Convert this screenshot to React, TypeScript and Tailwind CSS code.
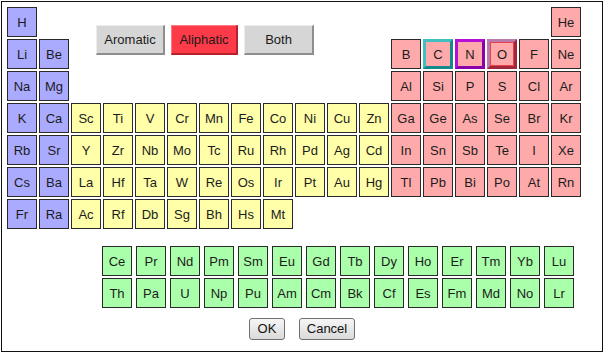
import React from 'react';

type Kind = 's' | 'd' | 'p' | 'f';

const fills: Record<Kind, string> = {
  s: 'bg-[#aaaaff]',
  d: 'bg-[#ffffaa]',
  p: 'bg-[#ffaaaa]',
  f: 'bg-[#aaffaa]',
};

// highlighted cells in the p-block
const rings: Record<string, string> = {
  C: 'border-[3px] border-t-[#3fbfbf] border-l-[#3fbfbf] border-b-[#148a8a] border-r-[#148a8a]',
  N: 'border-[3px] border-t-[#b410d8] border-l-[#b410d8] border-b-[#8a00aa] border-r-[#8a00aa]',
  O: 'border-[3px] border-t-[#b87aa8] border-l-[#b87aa8] border-b-[#a3263a] border-r-[#a3263a] shadow-[inset_0_0_0_1px_#e8404c]',
};

const sBlock = [
  ['H', ''],
  ['Li', 'Be'],
  ['Na', 'Mg'],
  ['K', 'Ca'],
  ['Rb', 'Sr'],
  ['Cs', 'Ba'],
  ['Fr', 'Ra'],
];

const dBlock = [
  [],
  [],
  ['', '', '', '', '', '', '', '', '', ''],
  ['Sc', 'Ti', 'V', 'Cr', 'Mn', 'Fe', 'Co', 'Ni', 'Cu', 'Zn'],
  ['Y', 'Zr', 'Nb', 'Mo', 'Tc', 'Ru', 'Rh', 'Pd', 'Ag', 'Cd'],
  ['La', 'Hf', 'Ta', 'W', 'Re', 'Os', 'Ir', 'Pt', 'Au', 'Hg'],
  ['Ac', 'Rf', 'Db', 'Sg', 'Bh', 'Hs', 'Mt', '', '', ''],
];

const pBlock = [
  ['', '', '', '', '', 'He'],
  ['B', 'C', 'N', 'O', 'F', 'Ne'],
  ['Al', 'Si', 'P', 'S', 'Cl', 'Ar'],
  ['Ga', 'Ge', 'As', 'Se', 'Br', 'Kr'],
  ['In', 'Sn', 'Sb', 'Te', 'I', 'Xe'],
  ['Tl', 'Pb', 'Bi', 'Po', 'At', 'Rn'],
  ['', '', '', '', '', ''],
];

const lanthanides = ['Ce', 'Pr', 'Nd', 'Pm', 'Sm', 'Eu', 'Gd', 'Tb', 'Dy', 'Ho', 'Er', 'Tm', 'Yb', 'Lu'];
const actinides = ['Th', 'Pa', 'U', 'Np', 'Pu', 'Am', 'Cm', 'Bk', 'Cf', 'Es', 'Fm', 'Md', 'No', 'Lr'];

function Cell({ sym, kind }: { sym: string; kind: Kind }) {
  if (!sym) return <div className="w-[30px] h-[30px]" />;
  const ring = rings[sym] ?? 'border border-[#2a2a2a]';
  return (
    <div
      className={`w-[30px] h-[30px] flex items-center justify-center text-[13px] leading-none text-[#1c1c1c] cursor-pointer ${fills[kind]} ${ring}`}
    >
      {sym}
    </div>
  );
}

function ModeButton({ label, active, width }: { label: string; active?: boolean; width: string }) {
  return (
    <button
      className={`${width} h-[30px] text-[13px] text-[#1a1a1a] border-t border-l border-b-2 border-r-2 ${
        active
          ? 'bg-[#fd3a48] border-t-[#ff7a84] border-l-[#ff7a84] border-b-[#b8202c] border-r-[#b8202c]'
          : 'bg-[#d6d6d6] border-t-[#ececec] border-l-[#ececec] border-b-[#8e8e8e] border-r-[#8e8e8e]'
      }`}
    >
      {label}
    </button>
  );
}

function DialogButton({ label, width }: { label: string; width: string }) {
  return (
    <button
      className={`${width} h-[22px] text-[13px] text-[#111] rounded-[3px] border border-[#707070] bg-gradient-to-b from-[#f6f6f6] to-[#dadada]`}
    >
      {label}
    </button>
  );
}

export default function App() {
  const rows = sBlock.map((s, i) => ({ s, d: dBlock[i], p: pBlock[i] }));

  return (
    <div className="p-[1px] bg-white" style={{ fontFamily: '"Liberation Sans", Arial, sans-serif' }}>
      <div className="w-[602px] h-[351px] border border-[#111] bg-white flex flex-col pt-[5px] pl-[5px]">
        <div className="flex flex-col gap-[2px] relative">
          {rows.map((r, i) => (
            <div key={i} className="flex gap-[2px]">
              {r.s.map((sym, j) => (
                <Cell key={'s' + j} sym={sym} kind="s" />
              ))}
              {i < 2 ? (
                i === 0 ? (
                  <div className="w-[318px] h-[30px] pl-[25px] pt-[18px] overflow-visible">
                    <div className="flex gap-[6px]">
                      <ModeButton label="Aromatic" width="w-[69px]" />
                      <ModeButton label="Aliphatic" active width="w-[67px]" />
                      <ModeButton label="Both" width="w-[70px]" />
                    </div>
                  </div>
                ) : (
                  <div className="w-[318px] h-[30px]" />
                )
              ) : (
                r.d.map((sym, j) => <Cell key={'d' + j} sym={sym} kind="d" />)
              )}
              {r.p.map((sym, j) => (
                <Cell key={'p' + j} sym={sym} kind="p" />
              ))}
            </div>
          ))}
        </div>

        <div className="flex flex-col gap-[2px] mt-[17px] ml-[95px]">
          <div className="flex gap-[4px]">
            {lanthanides.map((sym) => (
              <Cell key={sym} sym={sym} kind="f" />
            ))}
          </div>
          <div className="flex gap-[4px]">
            {actinides.map((sym) => (
              <Cell key={sym} sym={sym} kind="f" />
            ))}
          </div>
        </div>

        <div className="flex justify-center gap-[14px] mt-[10px] pr-[5px]">
          <DialogButton label="OK" width="w-[36px]" />
          <DialogButton label="Cancel" width="w-[56px]" />
        </div>
      </div>
    </div>
  );
}
